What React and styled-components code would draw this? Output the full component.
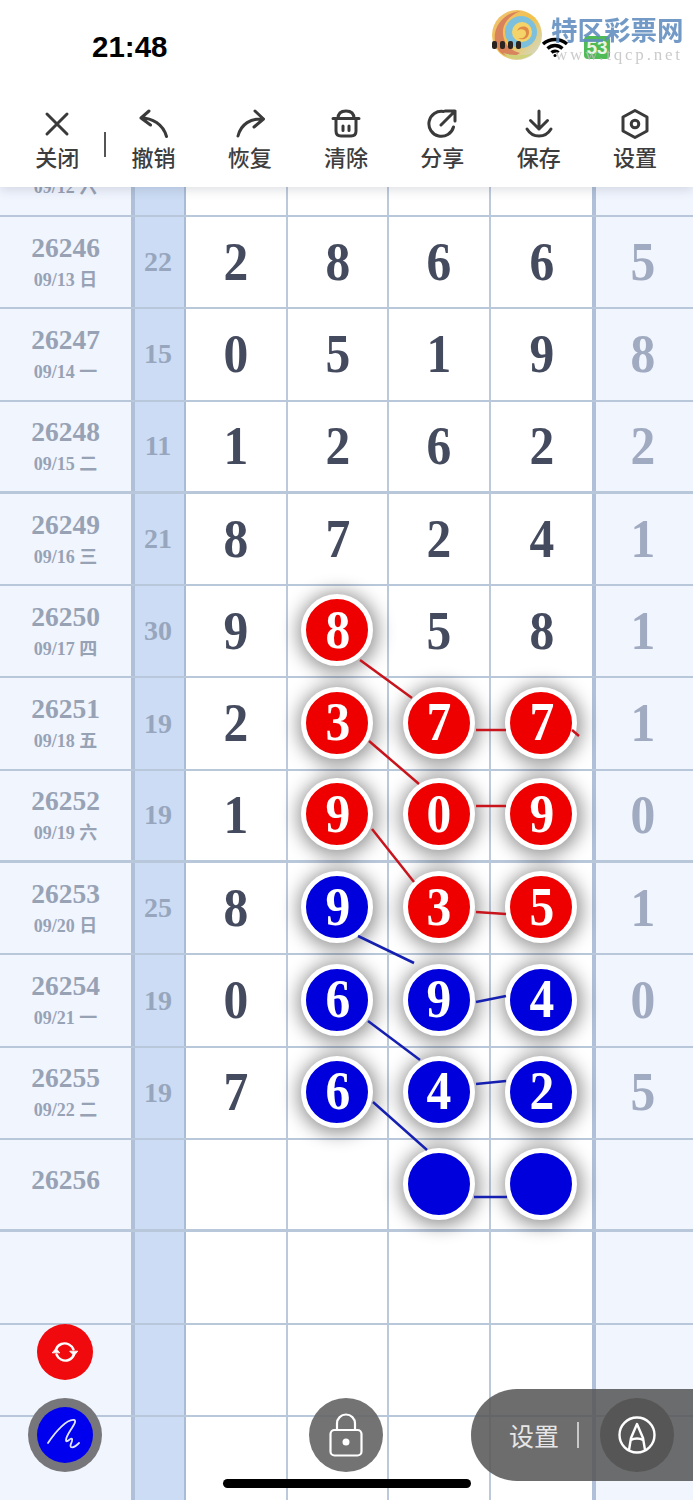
import React from 'react'
import styled, { createGlobalStyle } from 'styled-components'

const GlobalStyle = createGlobalStyle`
  html, body {
    margin: 0;
    padding: 0;
    height: 1500px;
    overflow: hidden;
    background: #fff;
    font-family: "Liberation Serif", "Noto Sans CJK SC", serif;
  }
`

const rows = [
  { no: '26245', date: '09/12 六', sum: '', cells: ['', '', '', ''], tail: '' },
  { no: '26246', date: '09/13 日', sum: '22', cells: ['2', '8', '6', '6'], tail: '5' },
  { no: '26247', date: '09/14 一', sum: '15', cells: ['0', '5', '1', '9'], tail: '8' },
  { no: '26248', date: '09/15 二', sum: '11', cells: ['1', '2', '6', '2'], tail: '2', thick: true },
  { no: '26249', date: '09/16 三', sum: '21', cells: ['8', '7', '2', '4'], tail: '1' },
  { no: '26250', date: '09/17 四', sum: '30', cells: ['9', 'r8', '5', '8'], tail: '1' },
  { no: '26251', date: '09/18 五', sum: '19', cells: ['2', 'r3', 'r7', 'r7'], tail: '1' },
  { no: '26252', date: '09/19 六', sum: '19', cells: ['1', 'r9', 'r0', 'r9'], tail: '0', thick: true },
  { no: '26253', date: '09/20 日', sum: '25', cells: ['8', 'b9', 'r3', 'r5'], tail: '1' },
  { no: '26254', date: '09/21 一', sum: '19', cells: ['0', 'b6', 'b9', 'b4'], tail: '0' },
  { no: '26255', date: '09/22 二', sum: '19', cells: ['7', 'b6', 'b4', 'b2'], tail: '5' },
  { no: '26256', date: '', sum: '', cells: ['', '', 'b', 'b'], tail: '', thick: true },
  { no: '', date: '', sum: '', cells: ['', '', '', ''], tail: '' },
  { no: '', date: '', sum: '', cells: ['', '', '', ''], tail: '' },
  { no: '', date: '', sum: '', cells: ['', '', '', ''], tail: '' },
]

// trend lines, page coordinates
const redLines = [
  [360, 660, 412, 698],
  [476, 730, 506, 730],
  [572, 730, 579, 736],
  [369, 741, 419, 784],
  [476, 806, 506, 806],
  [372, 829, 414, 882],
  [476, 912, 506, 914],
]
const blueLines = [
  [358, 936, 414, 963],
  [476, 1002, 506, 996],
  [368, 1021, 420, 1060],
  [476, 1084, 506, 1081],
  [373, 1102, 427, 1150],
  [474, 1197, 507, 1197],
]

const Icon = ({ children }) => (
  <svg width="30" height="30" viewBox="0 0 30 30" fill="none" stroke="#3a3a3a" strokeWidth="3" strokeLinecap="round" strokeLinejoin="round">
    {children}
  </svg>
)

const tools = [
  { label: '关闭', icon: <path d="M5 5l20 20M25 5L5 25" /> },
  { label: '撤销', icon: <path d="M11 2L3 9l9.500 7M3 9c11 0 22 6 25.500 18.500" /> },
  { label: '恢复', icon: <path d="M20 2l8.500 8-9.500 8M28 10C16 9 6 15 3 27" /> },
  {
    label: '清除',
    icon: (
      <>
        <path d="M2 9.500h26M7 9.500C7 4 10 2 15 2s8 2 8 7.500" />
        <path d="M5 10v12c0 3.500 2 5 5 5h10c3 0 5-1.500 5-5V10" />
        <path d="M12 17v4.500M18 17v4.500" />
      </>
    ),
  },
  { label: '分享', icon: <path d="M16.500 2.500A12.500 12.500 0 1 0 26.500 18M18 2h10v10M28 2L14 16" /> },
  { label: '保存', icon: <path d="M15 2v18M6.500 11.500L15 20l8.500-8.500M3 20c3 5 7 7 12 7s9-2 12-7" /> },
  {
    label: '设置',
    icon: (
      <>
        <path d="M15 1.500l12 6.500v14l-12 6.500L3 22V8z" />
        <circle cx="15" cy="15" r="3.800" />
      </>
    ),
  },
]

function Ball({ value }) {
  const color = value[0] === 'r' ? 'red' : 'blue'
  return (
    <BallDot $color={color}>
      <Digit>{value.slice(1)}</Digit>
    </BallDot>
  )
}

function Logo() {
  return (
    <LogoBox>
      <svg width="52" height="52" viewBox="0 0 52 52">
        <defs>
          <linearGradient id="egg" x1="0" y1="0" x2="1" y2="1">
            <stop offset="0" stopColor="#eec27a" />
            <stop offset="0.5" stopColor="#f2c24a" />
            <stop offset="1" stopColor="#c9dfe6" />
          </linearGradient>
        </defs>
        <circle cx="26" cy="26" r="25" fill="url(#egg)" />
        <path d="M8 42C-3 26 8 4 30 2 16 7 9 18 13 30c2 7 8 12 16 14-7 5-16 4-21-2z" fill="#d5785a" opacity=".85" />
        <circle cx="30" cy="23" r="16" fill="#7cc0de" />
        <circle cx="31" cy="23" r="10" fill="#f4d468" />
        <path d="M26 22c2-6 12-6 12 1s-7 9-11 6c5 1 8-1 8-5s-6-5-9-2z" fill="#e08a4a" />
        <path d="M12 44c8 8 20 8 30 0-8 3-20 3-30 0z" fill="#cfd27a" />
      </svg>
      <LogoText>
        <LogoTitle>特区彩票网</LogoTitle>
        <LogoUrl>www.tqcp.net</LogoUrl>
      </LogoText>
    </LogoBox>
  )
}

function App() {
  return (
    <>
      <GlobalStyle />
      <Page>
        <Header>
          <StatusBar>
            <Clock>21:48</Clock>
            <StatusIcons>
              <Signal>
                <SignalBar />
                <SignalBar />
                <SignalBar />
                <SignalBar />
              </Signal>
              <svg width="28" height="22" viewBox="0 0 28 22" fill="none" stroke="#000" strokeWidth="3.400">
                <path d="M2 8c7-6 17-6 24 0M6.500 12.500c4.500-4 10.500-4 15 0M10.500 16.500c2-1.800 5-1.800 7 0" />
                <circle cx="14" cy="19.500" r="1.500" fill="#000" stroke="none" />
              </svg>
              <Battery>53</Battery>
            </StatusIcons>
          </StatusBar>
          <Logo />
          <Toolbar>
            {tools.map((tool, index) => (
              <Tool key={tool.label}>
                <Icon>{tool.icon}</Icon>
                <span>{tool.label}</span>
                {index === 0 && <ToolDivider />}
              </Tool>
            ))}
          </Toolbar>
        </Header>

        <Chart>
          {rows.map((row, index) => (
            <Row key={index} $thick={row.thick}>
              <IssueCell $solo={!row.date}>
                {row.no && <IssueNo>{row.no}</IssueNo>}
                {row.date && <IssueDate>{row.date}</IssueDate>}
              </IssueCell>
              <SumCell>{row.sum}</SumCell>
              {row.cells.map((value, i) => (
                <Cell key={i}>{/^[rb]/.test(value) ? <Ball value={value} /> : <Digit>{value}</Digit>}</Cell>
              ))}
              <TailCell>
                <Digit>{row.tail}</Digit>
              </TailCell>
            </Row>
          ))}
        </Chart>

        <TrendLines width="693" height="1500" viewBox="0 0 693 1500">
          {redLines.map((l, i) => (
            <line key={i} x1={l[0]} y1={l[1]} x2={l[2]} y2={l[3]} stroke="#c8141c" strokeWidth="2.500" />
          ))}
          {blueLines.map((l, i) => (
            <line key={i} x1={l[0]} y1={l[1]} x2={l[2]} y2={l[3]} stroke="#1620b0" strokeWidth="2.500" />
          ))}
        </TrendLines>

        <RefreshButton>
          <svg width="32" height="32" viewBox="0 0 32 32" fill="none" stroke="#fff" strokeWidth="2.400" strokeLinecap="round">
            <path d="M7 13.500C9 8 15 6 20 8.500c2 1 3.500 2.500 4.500 5M25 18.500C23 24 17 26 12 23.500c-2-1-3.500-2.500-4.500-5" />
            <path d="M3.500 16.500l3.500-4 3.500 4zM21 15.500l4 4 3.500-4z" fill="#fff" strokeWidth="1" strokeLinejoin="round" />
          </svg>
        </RefreshButton>
        <PenButton>
          <PenInner>
            <svg width="36" height="36" viewBox="0 0 36 36" fill="none" stroke="#dfe4ff" strokeWidth="1.800" strokeLinecap="round" strokeLinejoin="round">
              <path d="M1 26C9 14 20 2 27 3c5 1-8 14-8 20 0 4 5-3 6-1 1 3-3 6-1 8 2 1 5-1 8-4" />
            </svg>
          </PenInner>
        </PenButton>
        <LockButton>
          <svg width="34" height="44" viewBox="0 0 34 44" fill="none" stroke="#fff" strokeWidth="2.200">
            <rect x="1.500" y="17" width="31" height="25.500" rx="4" />
            <path d="M8 17v-6.500a9 9 0 0 1 18 0V17" />
            <circle cx="17" cy="29" r="3.500" fill="#fff" stroke="none" />
          </svg>
        </LockButton>
        <SettingsPill>
          <PillLabel>设置</PillLabel>
          <PillDivider />
          <PillRound>
            <svg width="40" height="40" viewBox="0 0 40 40" fill="none" stroke="#fff" strokeWidth="2.400" strokeLinejoin="round">
              <circle cx="20" cy="20" r="17.500" />
              <path d="M12 35l2-12 6-14 6 14 2 12M14 25c3-2 9-2 12 0" />
            </svg>
          </PillRound>
        </SettingsPill>
        <HomeBar />
      </Page>
    </>
  )
}

export default App

const Page = styled.div`
  position: relative;
  width: 693px;
  height: 1500px;
  overflow: hidden;
  background: #fff;
`

const Header = styled.header`
  position: relative;
  z-index: 5;
  height: 187px;
  background: #fff;
  box-shadow: 0 3px 10px rgba(60, 70, 90, 0.16);
`

const StatusBar = styled.div`
  height: 94px;
  display: flex;
  align-items: center;
  justify-content: space-between;
  padding: 0 83px 0 92px;
  box-sizing: border-box;
`

const Clock = styled.div`
  font-family: "Liberation Sans", sans-serif;
  font-weight: 700;
  font-size: 29.500px;
  color: #000;
`

const StatusIcons = styled.div`
  display: flex;
  align-items: center;
  gap: 15px;
`

const Signal = styled.div`
  position: relative;
  z-index: 1;
  display: flex;
  gap: 3px;
  margin-right: 5px;
  margin-bottom: 4px;
`

const SignalBar = styled.div`
  width: 5px;
  height: 8px;
  border-radius: 2px;
  background: #2a2320;
`

const Battery = styled.div`
  width: 26px;
  height: 23px;
  border-radius: 4px;
  background: #4ebb57;
  color: #e8f5e8;
  font-family: "Liberation Sans", sans-serif;
  font-size: 19px;
  font-weight: 700;
  line-height: 23px;
  text-align: center;
`

const LogoBox = styled.div`
  position: absolute;
  top: 9px;
  left: 491px;
  display: flex;
  filter: blur(0.6px);
`

const LogoText = styled.div`
  display: flex;
  flex-direction: column;
  margin-left: 8px;
`

const LogoTitle = styled.div`
  margin-top: 3px;
  font-family: "Noto Sans CJK SC", sans-serif;
  font-weight: 700;
  font-size: 26.500px;
  line-height: 34px;
  white-space: nowrap;
  color: rgba(96, 140, 190, 0.88);
`

const LogoUrl = styled.div`
  margin-left: 4px;
  font-size: 17px;
  line-height: 18px;
  letter-spacing: 2.800px;
  white-space: nowrap;
  color: rgba(190, 190, 190, 0.8);
`

const Toolbar = styled.nav`
  display: grid;
  grid-template-columns: repeat(7, 96.3px);
  padding-left: 9px;
`

const Tool = styled.div`
  position: relative;
  height: 76px;
  display: flex;
  flex-direction: column;
  align-items: center;
  gap: 3px;
  padding-top: 15px;
  box-sizing: border-box;
  font-family: "Noto Sans CJK SC", sans-serif;
  font-size: 22px;
  font-weight: 500;
  line-height: 28px;
  color: #3d3d3d;

  svg {
    display: block;
  }
`

const ToolDivider = styled.i`
  position: absolute;
  right: -1px;
  top: 38px;
  width: 2px;
  height: 25px;
  background: #555;
`

const Chart = styled.main`
  margin-top: -62.3px;
`

const Row = styled.div`
  display: grid;
  grid-template-columns: 131px 55px repeat(4, 101.5px) 101px;
  height: 92.3px;
  box-sizing: border-box;
  border-bottom: ${(props) => (props.$thick ? '3px' : '2px')} solid #b9c7da;
`

const IssueCell = styled.div`
  display: flex;
  flex-direction: column;
  align-items: center;
  justify-content: center;
  gap: 5px;
  padding-bottom: ${(props) => (props.$solo ? '10px' : '2px')};
  background: #f0f5fe;
  color: #98a2b5;
  font-weight: 700;
`

const IssueNo = styled.div`
  font-size: 27.500px;
  line-height: 32px;
`

const IssueDate = styled.div`
  font-size: 18px;
  line-height: 22px;
`

const SumCell = styled.div`
  display: flex;
  align-items: center;
  justify-content: center;
  box-sizing: border-box;
  padding-right: 3px;
  background: #cbdcf4;
  border-left: 4px solid #afc0d8;
  border-right: 2px solid #a9bcd6;
  color: #97a6bd;
  font-weight: 700;
  font-size: 28px;
`

const Cell = styled.div`
  display: flex;
  align-items: center;
  justify-content: center;
  box-sizing: border-box;
  border-right: 2px solid #bcc9db;
  color: #454b5e;
  font-weight: 700;
  font-size: 55px;

  &:nth-child(6) {
    border-right: none;
  }
`

const TailCell = styled.div`
  display: flex;
  align-items: center;
  justify-content: center;
  box-sizing: border-box;
  padding-right: 4px;
  background: #f0f5fe;
  border-left: 4px solid #afc0d8;
  color: #a0aac0;
  font-weight: 700;
  font-size: 55px;
`

// the digits of the chart are narrower than the serif face at this height
const Digit = styled.span`
  display: inline-block;
  line-height: 1;
  transform: translateY(-1px) scaleX(0.9);
`

const BallDot = styled.div`
  position: relative;
  z-index: 2;
  width: 72px;
  height: 72px;
  flex: none;
  margin-top: -2px;
  box-sizing: border-box;
  display: flex;
  align-items: center;
  justify-content: center;
  border: 5px solid #fff;
  border-radius: 50%;
  background: ${(props) => (props.$color === 'red' ? '#ee0000' : '#0000dc')};
  box-shadow: 1px 2px 18px 4px rgba(0, 0, 0, 0.42);
  color: #fff;
  font-size: 55px;
`

const TrendLines = styled.svg`
  position: absolute;
  left: 0;
  top: 0;
  z-index: 3;
  pointer-events: none;
`

const RefreshButton = styled.div`
  position: absolute;
  z-index: 4;
  left: 37px;
  top: 1324px;
  width: 56px;
  height: 56px;
  display: flex;
  align-items: center;
  justify-content: center;
  border-radius: 50%;
  background: #f00a0d;
`

const PenButton = styled.div`
  position: absolute;
  z-index: 4;
  left: 28px;
  top: 1398px;
  width: 74px;
  height: 74px;
  display: flex;
  align-items: center;
  justify-content: center;
  border-radius: 50%;
  background: #77777b;
`

const PenInner = styled.div`
  width: 56px;
  height: 56px;
  display: flex;
  align-items: center;
  justify-content: center;
  border-radius: 50%;
  background: #0000ee;
`

const LockButton = styled.div`
  position: absolute;
  z-index: 4;
  left: 309px;
  top: 1398px;
  width: 74px;
  height: 74px;
  display: flex;
  align-items: center;
  justify-content: center;
  border-radius: 50%;
  background: rgba(100, 100, 100, 0.9);
`

const SettingsPill = styled.div`
  position: absolute;
  z-index: 4;
  left: 471px;
  top: 1389px;
  width: 222px;
  height: 92px;
  box-sizing: border-box;
  display: flex;
  align-items: center;
  padding-left: 38px;
  border-radius: 46px 0 0 46px;
  background: rgba(85, 85, 85, 0.86);
`

const PillLabel = styled.span`
  font-family: "Noto Sans CJK SC", sans-serif;
  font-size: 25px;
  color: #e6e6e6;
`

const PillDivider = styled.i`
  width: 2px;
  height: 26px;
  margin-left: 18px;
  background: #c8c8c8;
`

const PillRound = styled.div`
  width: 74px;
  height: 74px;
  margin-left: 21px;
  display: flex;
  align-items: center;
  justify-content: center;
  border-radius: 50%;
  background: #565656;
`

const HomeBar = styled.div`
  position: absolute;
  z-index: 6;
  left: 223px;
  top: 1479px;
  width: 248px;
  height: 9px;
  border-radius: 5px;
  background: #000;
`
